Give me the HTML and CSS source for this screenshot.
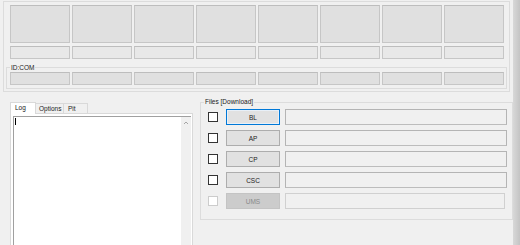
FILE: index.html
```html
<!DOCTYPE html>
<html lang="en">
<head>
    <meta charset="UTF-8">
    <title>Odin</title>
    <link rel="stylesheet" href="styles.css">
</head>
<body>

<div class="window">
    <div class="main">
        <div class="status-panel">
            <div class="cells cells-big">
                <div class="cell"></div><div class="cell"></div><div class="cell"></div><div class="cell"></div>
                <div class="cell"></div><div class="cell"></div><div class="cell"></div><div class="cell"></div>
            </div>
            <div class="cells cells-small">
                <div class="cell"></div><div class="cell"></div><div class="cell"></div><div class="cell"></div>
                <div class="cell"></div><div class="cell"></div><div class="cell"></div><div class="cell"></div>
            </div>
            <fieldset class="group idcom">
                <legend>ID:COM</legend>
                <div class="cells cells-com">
                    <div class="cell"></div><div class="cell"></div><div class="cell"></div><div class="cell"></div>
                    <div class="cell"></div><div class="cell"></div><div class="cell"></div><div class="cell"></div>
                </div>
            </fieldset>
        </div>

        <div class="lower">
            <div class="tabs">
                <div class="tab-strip">
                    <div class="tab tab-log active">Log</div>
                    <div class="tab tab-options">Options</div>
                    <div class="tab tab-pit">Pit</div>
                </div>
                <div class="tab-panel">
                    <div class="log">
                        <div class="log-text"><span class="caret"></span></div>
                        <div class="scrollbar">
                            <svg width="10" height="10" viewBox="0 0 10 10">
                                <polyline points="3,7 5,5 7,7" fill="none" stroke="#a6a6a6" stroke-width="1"/>
                            </svg>
                        </div>
                    </div>
                </div>
            </div>

            <fieldset class="group files">
                <legend>Files [Download]</legend>
                <div class="file-rows">
                    <div class="file-row">
                        <span class="check"></span>
                        <button class="btn focus">BL</button>
                        <div class="path"></div>
                    </div>
                    <div class="file-row">
                        <span class="check"></span>
                        <button class="btn">AP</button>
                        <div class="path"></div>
                    </div>
                    <div class="file-row">
                        <span class="check"></span>
                        <button class="btn">CP</button>
                        <div class="path"></div>
                    </div>
                    <div class="file-row">
                        <span class="check"></span>
                        <button class="btn">CSC</button>
                        <div class="path"></div>
                    </div>
                    <div class="file-row">
                        <span class="check off"></span>
                        <button class="btn" disabled>UMS</button>
                        <div class="path off"></div>
                    </div>
                </div>
            </fieldset>
        </div>
    </div>
    <div class="frame"></div>
</div>

</body>
</html>
```

FILE: styles.css
```css
body {
    margin: 0;
    background-color: #f0f0f0;
    font-family: "Liberation Sans", Arial, sans-serif;
    font-size: 6.5px;
    color: #222;
}

.window {
    display: flex;
    width: 520px;
    height: 245px;
    overflow: hidden;
}

.main {
    width: 513px;
    flex: none;
}

.frame {
    flex: 1;
    background: linear-gradient(to right, #d8d8d8, #c4c4c4);
}

/* top status area */
.status-panel {
    margin: 1px 0 0 3px;
    width: 507px;
    box-sizing: border-box;
    border: 1px solid #dcdcdc;
    padding: 3px 2px 2px 2px;
}

.cells {
    display: flex;
    gap: 2px;
}

.cells-big,
.cells-small {
    margin-left: 4px;
}

.cell {
    width: 60px;
    flex: none;
    box-sizing: border-box;
    border: 1px solid #c6c6c6;
    border-top-color: #bdbdbd;
    background-color: #e0e0e0;
}

.cells-big .cell {
    height: 38px;
}

.cells-small {
    margin-top: 3px;
}

.cells-small .cell,
.cells-com .cell {
    height: 13px;
}

.cells-small .cell {
    background-color: #e8e8e8;
}

.group {
    margin: 0;
    border: 1px solid #dcdcdc;
    min-width: 0;
}

.group legend {
    padding: 0 1px;
    line-height: 7px;
}

.idcom {
    margin-top: 5px;
    padding: 1px 3px 3px 3px;
}

/* lower area */
.lower {
    display: flex;
    align-items: flex-start;
}

.tabs {
    margin: 10px 0 0 10px;
    width: 183px;
    flex: none;
}

.tab-strip {
    display: flex;
    align-items: flex-end;
    height: 11px;
}

.tab {
    height: 10px;
    box-sizing: border-box;
    border: 1px solid #d9d9d9;
    border-bottom: none;
    padding-left: 3px;
    line-height: 9px;
    background-color: #f0f0f0;
}

.tab + .tab {
    border-left: none;
}

.tab-log {
    width: 26px;
    padding-left: 4px;
}

.tab-options {
    width: 28px;
}

.tab-pit {
    width: 24px;
    padding-left: 4px;
}

.tab.active {
    height: 12px;
    margin-bottom: -1px;
    line-height: 10px;
    background-color: #fff;
    position: relative;
}

.tab-panel {
    height: 140px;
    box-sizing: border-box;
    border: 1px solid #d9d9d9;
    background-color: #fff;
    padding: 2px 0 0 2px;
}

.log {
    display: flex;
    width: 178px;
    height: 136px;
    box-sizing: border-box;
    border-top: 1px solid #a0a0a0;
    border-left: 1px solid #a0a0a0;
}

.log-text {
    flex: 1;
    padding: 1px 0 0 1px;
}

.caret {
    display: block;
    width: 1px;
    height: 7px;
    background-color: #000;
}

.scrollbar {
    width: 10px;
    background-color: #f0f0f0;
}

.scrollbar svg {
    display: block;
}

.files {
    margin: 6px 0 0 7px;
    width: 313px;
    box-sizing: border-box;
    padding: 3px 5px 10px 7px;
}

.files legend {
    margin-left: -4px;
    line-height: 8px;
}

.file-rows {
    display: flex;
    flex-direction: column;
    gap: 5px;
}

.file-row {
    display: flex;
    align-items: center;
    height: 16px;
}

.check {
    width: 10px;
    height: 10px;
    box-sizing: border-box;
    border: 1px solid #333;
    background-color: #fff;
    margin-right: 8px;
    flex: none;
}

.check.off {
    border-color: #cccccc;
}

.btn {
    width: 54px;
    height: 16px;
    box-sizing: border-box;
    margin: 0 5px 0 0;
    padding: 0;
    border: 1px solid #adadad;
    background-color: #e1e1e1;
    font: inherit;
    color: #222;
    flex: none;
}

.btn.focus {
    border-color: #0078d7;
    box-shadow: inset 0 0 0 1px #e8f0f8;
}

.btn:disabled {
    border-color: #c4c4c4;
    background-color: #cccccc;
    color: #8a8a8a;
}

.path {
    flex: 1;
    height: 16px;
    box-sizing: border-box;
    border: 1px solid #b4b4b4;
    border-bottom-color: #bcbcbc;
    background-color: #f0f0f0;
}

.path.off {
    border-color: #d0d0d0;
    margin-right: 2px;
}
```
